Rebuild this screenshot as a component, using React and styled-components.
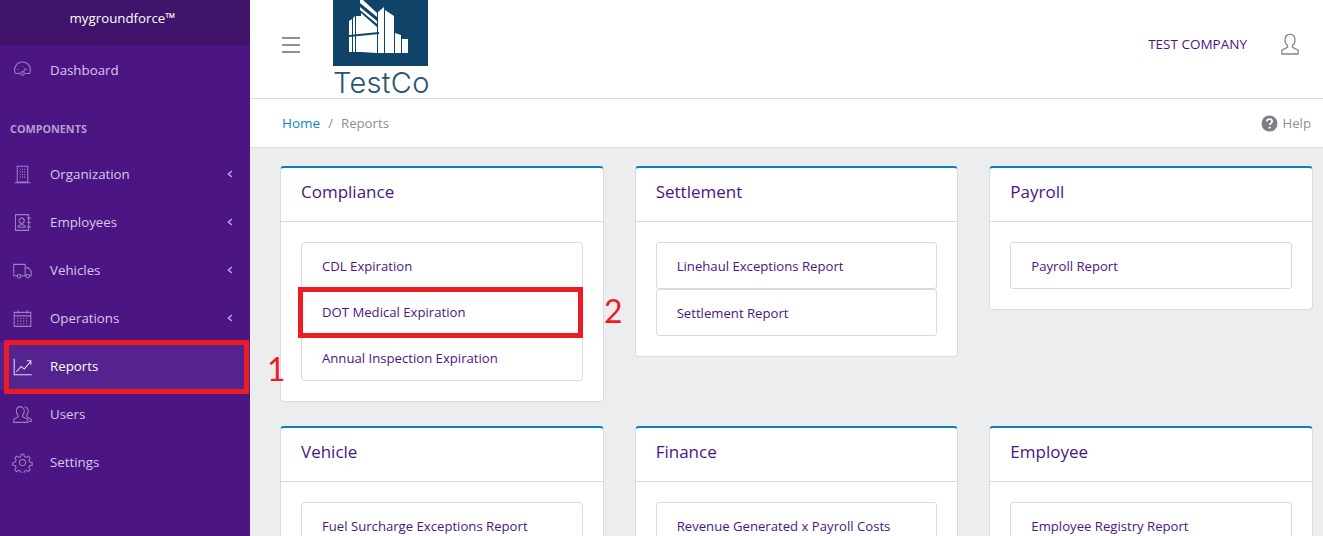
import React from 'react';
import styled, { createGlobalStyle } from 'styled-components';

const GlobalStyle = createGlobalStyle`
    html, body {
        margin: 0;
        padding: 0;
        height: 100%;
        overflow: hidden;
        font-family: "Open Sans", "Noto Sans", sans-serif;
    }
    * {
        box-sizing: border-box;
    }
`;

const Page = styled.div`
    display: flex;
    width: 100%;
    height: 100vh;
    overflow: hidden;
    background: #ebedef;
`;

const Sidebar = styled.aside`
    flex: 0 0 250px;
    position: relative;
    z-index: 2;
    background: #4b1584;
`;

const Brand = styled.div`
    height: 45px;
    margin-bottom: 1px;
    padding: 9px 5px 0 0;
    background: #3e1369;
    color: #fff;
    font-size: 13.3px;
    line-height: 18px;
    text-align: center;
`;

const NavItem = styled.div`
    position: relative;
    display: flex;
    align-items: center;
    height: 48px;
    padding: 0 12px;
    font-size: 13.3px;
    color: ${props => (props.$active ? '#fff' : '#d9c8ec')};
    background: ${props => (props.$active ? '#55238f' : 'transparent')};
`;

const NavIcon = styled.span`
    display: flex;
    width: 38px;
    color: ${props => (props.$active ? '#e8dff2' : '#9c7fc2')};
`;

const Chevron = styled.span`
    margin-left: auto;
    margin-right: 5px;
    display: flex;
    color: #b9a3d4;
`;

const NavTitle = styled.div`
    height: 56px;
    padding: 27px 10px 0;
    color: #b79fd3;
    font-size: 10.8px;
    line-height: 16px;
    font-weight: 700;
`;

const SidebarMark = styled.div`
    position: absolute;
    top: -2px;
    bottom: -4px;
    left: 4px;
    right: 1px;
    border: 5px solid #ed1c24;
`;

const MarkNumber = styled.span`
    position: absolute;
    left: ${props => props.$left}px;
    top: ${props => props.$top}px;
    color: #ed1c24;
    font-family: "Lato", sans-serif;
    font-size: 32px;
    line-height: 36px;
`;

const Main = styled.main`
    flex: 1;
    min-width: 0;
`;

const Header = styled.header`
    display: flex;
    align-items: flex-start;
    height: 99px;
    padding-left: 32px;
    background: #fff;
    border-bottom: 1px solid #d8dbe0;
`;

const Burger = styled.button`
    display: flex;
    flex-direction: column;
    gap: 5px;
    width: 18px;
    margin-top: 37px;
    padding: 0;
    border: 0;
    background: none;

    span {
        display: block;
        height: 2px;
        background: #8f8f98;
    }
`;

const Logo = styled.div`
    width: 95px;
    margin-left: 33px;
`;

const LogoBox = styled.div`
    display: flex;
    height: 66px;
    background: #0f4368;
`;

const LogoText = styled.div`
    margin-top: 1px;
    color: #2a5372;
    font-family: "Inter", sans-serif;
    font-size: 29px;
    font-weight: 300;
    letter-spacing: 0.3px;
    line-height: 32px;
    text-align: center;
    white-space: nowrap;
`;

const HeaderRight = styled.div`
    display: flex;
    align-items: center;
    gap: 33px;
    margin-left: auto;
    margin-top: 31px;
    padding-right: 23px;
    color: #4b1584;
    font-size: 13.5px;
    line-height: 26px;
`;

const Crumbs = styled.nav`
    display: flex;
    align-items: center;
    height: 49px;
    padding: 0 12px 0 32px;
    background: #fff;
    border-bottom: 1px solid #d8dbe0;
    font-size: 13.2px;
    color: #8a8f96;
`;

const HomeLink = styled.a`
    color: #0b86c6;
    font-size: 13.5px;
`;

const Slash = styled.span`
    margin: 0 8px;
`;

const Help = styled.span`
    display: flex;
    align-items: center;
    gap: 4px;
    margin-left: auto;
`;

const Grid = styled.div`
    display: grid;
    grid-template-columns: repeat(3, 1fr);
    align-items: start;
    gap: 24px 31px;
    padding: 18px 10px 0 30px;
`;

const Card = styled.section`
    background: #fff;
    border: 1px solid #d8dbe0;
    border-top: 2px solid #0a80c0;
    border-radius: 4px;
`;

const CardHeader = styled.h3`
    height: 54px;
    margin: 0;
    padding: 0 20px;
    border-bottom: 1px solid #d8dbe0;
    color: #4b1584;
    font-size: 17px;
    font-weight: 500;
    line-height: 47px;
`;

const CardBody = styled.div`
    padding: 20px;
`;

const ReportList = styled.div`
    display: flex;
    flex-direction: column;
    border: ${props => (props.$split ? '0' : '1px solid #d8dbe0')};
    border-radius: 4px;
`;

const ReportItem = styled.a`
    position: relative;
    display: block;
    height: ${props => (props.$split ? '47px' : '46px')};
    padding: 0 20px;
    border: ${props => (props.$split ? '1px solid #d8dbe0' : '0')};
    border-radius: ${props => (props.$split ? '3px' : '0')};
    color: #4b1584;
    font-size: 13.15px;
    line-height: ${props => (props.$split ? '47px' : '46px')};

    &:last-child:not(:first-child) {
        height: ${props => (props.$split ? '47px' : '45px')};
    }
`;

const ItemMark = styled.div`
    position: absolute;
    top: -2px;
    bottom: -3px;
    left: -4px;
    right: -1px;
    border: 5px solid #ed1c24;
`;

const lineProps = {
    fill: 'none',
    stroke: 'currentColor',
    strokeWidth: 1.2,
};

const icons = {
    gauge: (
        <>
            <path d="M4 15.500A9 9 0 1 1 20 15.500H15M9.500 15.500H4" />
            <circle cx="12" cy="15.500" r="2" />
            <path d="M13 14l2.500-5M6.500 10.500l1 .6M17.500 10.500l-1 .6M12 7v1" />
        </>
    ),
    building: (
        <>
            <path d="M6 2.500h12v18H6zM3 21.500h18" />
            <path d="M9 6h1.200M11.400 6h1.200M13.800 6h1.200M9 9h1.200M11.400 9h1.200M13.800 9h1.200M9 12h1.200M11.400 12h1.200M13.800 12h1.200M9 15h1.200M11.400 15h1.200M13.800 15h1.200" />
        </>
    ),
    contact: (
        <>
            <path d="M4 3h15v18H4zM21.500 7h-4M21.500 12h-4M21.500 17h-4" />
            <circle cx="11" cy="10" r="3" />
            <path d="M7 17.500v-1.500l2.500-1.500h3l2.500 1.500v1.500z" />
        </>
    ),
    truck: (
        <>
            <path d="M6 18H2V5h13v13H10M15 9h4l3 4v5h-2M15 18h1" />
            <circle cx="8" cy="18.500" r="2" />
            <circle cx="18" cy="18.500" r="2" />
        </>
    ),
    calendar: (
        <>
            <path d="M2.500 5h19v16h-19zM2.500 9h19M7 2.500v4M17 2.500v4" />
            <path d="M6 12h1.400M9.300 12h1.400M12.600 12h1.400M16 12h1.400M6 15h1.400M9.300 15h1.400M12.600 15h1.400M16 15h1.400M6 18h1.400M9.300 18h1.400M12.600 18h1.400M16 18h1.400" />
        </>
    ),
    chart: <path d="M2.500 3v18.500h20M5 18l5.500-6 3.500 3 7.500-9M17 5.500h4.500V10" />,
    users: (
        <>
            <path d="M9 3a5 5 0 0 1 5 5c0 2-.8 3.800-2 5v1.500l6 3V21H2v-3.500l5-3V13c-1.200-1.200-2-3-2-5a4.500 4.500 0 0 1 4-5z" />
            <path d="M14 3.200a5 5 0 0 1 4.500 5c0 2-.8 3.600-1.800 4.800v1.500l5.300 3V20h-3" />
        </>
    ),
    gear: (
        <>
            <circle cx="12" cy="12" r="3.500" />
            <path d="M10.500 2.500h3l.6 2.700 2.300 1 2.400-1.500 2 2.100-1.500 2.400 1 2.300 2.700.6v3l-2.700.6-1 2.300 1.500 2.400-2 2.100-2.400-1.500-2.300 1-.6 2.700h-3l-.6-2.700-2.300-1-2.400 1.500-2-2.100 1.500-2.400-1-2.300-2.700-.6v-3l2.700-.6 1-2.300-1.500-2.400 2-2.100 2.400 1.500 2.300-1z" />
        </>
    ),
};

const LineIcon = ({ name }) => (
    <svg width="21" height="21" viewBox="0 0 24 24" {...lineProps}>
        {icons[name]}
    </svg>
);

const LeftArrow = () => (
    <svg width="6" height="8" viewBox="0 0 6 8" fill="none" stroke="currentColor" strokeWidth="1.600">
        <path d="M4.800 1L1.500 4l3.300 3" />
    </svg>
);

const navGroups = [
    { label: 'Organization', icon: 'building', arrow: true },
    { label: 'Employees', icon: 'contact', arrow: true },
    { label: 'Vehicles', icon: 'truck', arrow: true },
    { label: 'Operations', icon: 'calendar', arrow: true },
    { label: 'Reports', icon: 'chart', active: true, mark: true },
    { label: 'Users', icon: 'users' },
    { label: 'Settings', icon: 'gear' },
];

const reportCards = [
    { title: 'Compliance', items: ['CDL Expiration', 'DOT Medical Expiration', 'Annual Inspection Expiration'], marked: 1 },
    { title: 'Settlement', items: ['Linehaul Exceptions Report', 'Settlement Report'], split: true },
    { title: 'Payroll', items: ['Payroll Report'], split: true },
    { title: 'Vehicle', items: ['Fuel Surcharge Exceptions Report'] },
    { title: 'Finance', items: ['Revenue Generated x Payroll Costs'], split: true },
    { title: 'Employee', items: ['Employee Registry Report'], split: true },
];

const SideNavItem = ({ item }) => (
    <NavItem $active={item.active}>
        <NavIcon $active={item.active}>
            <LineIcon name={item.icon} />
        </NavIcon>
        {item.label}
        {item.arrow && (
            <Chevron>
                <LeftArrow />
            </Chevron>
        )}
        {item.mark && (
            <>
                <SidebarMark />
                <MarkNumber $left={267} $top={9}>1</MarkNumber>
            </>
        )}
    </NavItem>
);

const ReportCard = ({ card }) => (
    <Card>
        <CardHeader>{card.title}</CardHeader>
        <CardBody>
            <ReportList $split={card.split}>
                {card.items.map((label, index) => (
                    <ReportItem key={label} $split={card.split}>
                        {label}
                        {card.marked === index && (
                            <>
                                <ItemMark />
                                <MarkNumber $left={302} $top={4}>2</MarkNumber>
                            </>
                        )}
                    </ReportItem>
                ))}
            </ReportList>
        </CardBody>
    </Card>
);

const App = () => (
    <>
        <GlobalStyle />
        <Page>
            <Sidebar>
                <Brand>mygroundforce™</Brand>
                <SideNavItem item={{ label: 'Dashboard', icon: 'gauge' }} />
                <NavTitle>COMPONENTS</NavTitle>
                {navGroups.map(item => (
                    <SideNavItem key={item.label} item={item} />
                ))}
            </Sidebar>
            <Main>
                <Header>
                    <Burger aria-label="menu">
                        <span />
                        <span />
                        <span />
                    </Burger>
                    <Logo>
                        <LogoBox>
                            <svg width="95" height="66" viewBox="0 0 95 66" fill="#fff">
                                <path d="M16 21l3-2v33h-3zM20 18l2-2v36h-2zM23 16h5v36h-5z" />
                                <path d="M27 0h3l14 13v4L27 3zM27 7l17 14v3L27 10zM28 13l16 14v26l-16-1z" />
                                <path d="M45 12l6-5v46h-6zM52 10l9 6v37h-9zM62 33l6 2v18h-6z" />
                                <path d="M69 39h6v14h-6z" />
                                <path d="M16 35l30-3v2L16 37z" fill="#0f4368" />
                            </svg>
                        </LogoBox>
                        <LogoText>TestCo</LogoText>
                    </Logo>
                    <HeaderRight>
                        TEST COMPANY
                        <svg width="20" height="24" viewBox="0 0 22 24" fill="none" stroke="#85858f" strokeWidth="1.400">
                            <path d="M11 1.500c3.300 0 5.500 2.500 5.500 6 0 2.700-1.200 5-2.800 6.200v2l6.300 3V23H2v-4.300l6.300-3v-2C6.700 12.500 5.500 10.200 5.500 7.500c0-3.500 2.200-6 5.500-6z" />
                        </svg>
                    </HeaderRight>
                </Header>
                <Crumbs>
                    <HomeLink>Home</HomeLink>
                    <Slash>/</Slash>
                    Reports
                    <Help>
                        <svg width="17" height="17" viewBox="0 0 17 17">
                            <circle cx="8.500" cy="8.500" r="8" fill="#7b7e85" />
                            <path d="M6 6.500c0-1.500 1-2.300 2.500-2.300s2.600.9 2.600 2.200c0 1.800-2.300 1.800-2.300 3.500" fill="none" stroke="#fff" strokeWidth="1.800" />
                            <circle cx="8.700" cy="12.600" r="1.100" fill="#fff" />
                        </svg>
                        Help
                    </Help>
                </Crumbs>
                <Grid>
                    {reportCards.map(card => (
                        <ReportCard key={card.title} card={card} />
                    ))}
                </Grid>
            </Main>
        </Page>
    </>
);

export default App;
